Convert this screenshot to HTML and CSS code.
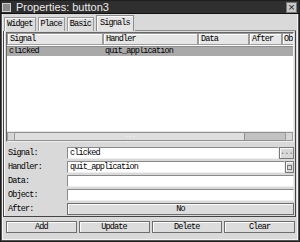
FILE: index.html
```html
<!DOCTYPE html>
<html lang="en">
  <head>
    <meta charset="UTF-8" />
    <title>Properties: button3</title>
    <link rel="stylesheet" href="styles.css">
  </head>
  <body>
    <div class="window">
      <div class="titlebar">
        <span class="win-icon"></span>
        <span class="title">Properties: button3</span>
        <span class="close">&times;</span>
      </div>
      <div class="client">
        <div class="tabs">
          <div class="tab">Widget</div>
          <div class="tab">Place</div>
          <div class="tab">Basic</div>
          <div class="tab active">Signals</div>
          <div class="tab-fill"></div>
        </div>
        <div class="page">
          <div class="list">
            <div class="list-head">
              <div class="col c-signal">Signal</div>
              <div class="col c-handler">Handler</div>
              <div class="col c-data">Data</div>
              <div class="col c-after">After</div>
              <div class="col c-obj">Ob</div>
            </div>
            <div class="list-row selected">
              <div class="cell c-signal">clicked</div>
              <div class="cell c-handler">quit_application</div>
            </div>
            <div class="list-body"></div>
            <div class="hscroll">
              <span class="arrow left"></span>
              <div class="trough">
                <span class="grip">&middot;&middot;&middot;</span>
                <span class="thumb"></span>
              </div>
              <span class="arrow right"></span>
            </div>
          </div>
          <div class="form">
            <label>Signal:</label>
            <div class="field">
              <div class="entry">clicked</div>
              <div class="small-btn dots">...</div>
            </div>
            <label>Handler:</label>
            <div class="field">
              <div class="entry">quit_application</div>
              <div class="small-btn combo"><span></span></div>
            </div>
            <label>Data:</label>
            <div class="field"><div class="entry"></div></div>
            <label>Object:</label>
            <div class="field"><div class="entry"></div></div>
            <label>After:</label>
            <div class="field"><div class="btn wide">No</div></div>
          </div>
        </div>
        <div class="actions">
          <div class="btn">Add</div>
          <div class="btn">Update</div>
          <div class="btn">Delete</div>
          <div class="btn">Clear</div>
        </div>
      </div>
    </div>
  </body>
</html>
```

FILE: styles.css
```css
/* Page */
body {
  margin: 0;
  font-family: "Liberation Mono", "DejaVu Sans Mono", monospace;
  font-size: 8.5px;
  letter-spacing: -0.85px;
  color: #000;
  background: #fff;
}

/* Window frame */
.window {
  width: 300px;
  height: 242px;
  box-sizing: border-box;
  background: #d9d9d9;
  border: 1px solid #1e1e1e;
  display: flex;
  flex-direction: column;
}

.titlebar {
  height: 12px;
  background: #2f2f2f;
  display: flex;
  align-items: center;
  padding: 0 2px 0 1px;
  border-bottom: 1px solid #111;
}

.win-icon {
  width: 9px;
  height: 9px;
  background: #8a8a8a;
  border: 1px solid #cfcfcf;
  box-sizing: border-box;
  margin-right: 5px;
}

.title {
  flex: 1;
  font-family: "Liberation Sans", Arial, sans-serif;
  font-size: 11px;
  letter-spacing: 0;
  color: #ececec;
}

.close {
  width: 9px;
  height: 9px;
  background: #c8c8c8;
  border: 1px solid #777;
  color: #111;
  font-family: "DejaVu Sans", sans-serif;
  font-size: 9px;
  line-height: 8px;
  text-align: center;
  letter-spacing: 0;
}

.client {
  flex: 1;
  display: flex;
  flex-direction: column;
  border: 1px solid #555;
  border-top: none;
  box-shadow: inset 1px 0 #f4f4f4, inset -1px -1px #f4f4f4;
  padding: 0 2px 3px 1px;
}

/* Tabs */
.tabs {
  display: flex;
  align-items: flex-end;
  height: 17px;
}

.tab {
  height: 13px;
  line-height: 13px;
  padding: 0 2px;
  background: #dcdcdc;
  border: 1px solid #9a9a9a;
  border-bottom: none;
  box-shadow: inset 1px 1px #fafafa;
  margin-right: 1px;
  margin-left: 1px;
}

.tab.active {
  height: 15px;
  line-height: 14px;
  background: #e4e4e4;
  border-color: #8c8c8c;
  padding: 0 3px;
}

.tab-fill {
  flex: 1;
  border-bottom: 1px solid #8c8c8c;
}

/* Notebook page */
.page {
  height: 184px;
  display: flex;
  flex-direction: column;
  border: 1px solid #444;
  border-top: none;
  box-shadow: inset 1px 0 #fafafa;
  padding: 1px 1px 0 2px;
}

.list {
  height: 108px;
  display: flex;
  flex-direction: column;
  background: #fff;
  border: 1px solid #666;
  border-right-color: #eee;
  border-bottom-color: #eee;
}

.list-head,
.list-row {
  display: flex;
  white-space: nowrap;
  overflow: hidden;
}

.col {
  height: 10px;
  line-height: 10px;
  padding-left: 2px;
  background: #e6e6e6;
  border: 1px solid #9c9c9c;
  box-shadow: inset 1px 1px #fff;
  box-sizing: border-box;
  flex-shrink: 0;
}

.list-head .col {
  height: 12px;
  line-height: 11px;
}

.cell {
  flex-shrink: 0;
  padding-left: 2px;
  box-sizing: border-box;
}

.c-signal { width: 96px; }
.c-handler { width: 95px; }
.c-data { width: 51px; }
.c-after { width: 33px; }
.list-head .c-obj {
  flex: 1;
  flex-shrink: 1;
  min-width: 0;
  padding-left: 1px;
  border-right: none;
}

.list-row {
  height: 9px;
  line-height: 9px;
  margin-top: 1px;
}

.list-row.selected {
  background: #a9a9a9;
  border-top: 1px solid #8c8c8c;
}

.list-body {
  flex: 1;
}

/* Horizontal scrollbar */
.hscroll {
  height: 9px;
  display: flex;
  background: #cfcfcf;
  border-top: 1px solid #e8e8e8;
}

.arrow {
  width: 8px;
  background: #d6d6d6;
  border: 1px solid #9a9a9a;
  box-sizing: border-box;
}

.trough {
  flex: 1;
  display: flex;
  align-items: center;
  background: #dedede;
  border-top: 1px solid #8f8f8f;
  border-bottom: 1px solid #8f8f8f;
}

.grip {
  flex: 1;
  text-align: center;
  color: #fafafa;
  font-size: 7px;
  line-height: 6px;
}

.thumb {
  width: 40px;
  align-self: stretch;
  background: #c2c2c2;
  border-left: 1px solid #8f8f8f;
}

/* Form */
.form {
  display: grid;
  grid-template-columns: 61px 1fr;
  grid-auto-rows: 12px;
  row-gap: 2px;
  margin-top: 5px;
  align-items: center;
}

label {
  padding-left: 2px;
  line-height: 12px;
}

.field {
  display: flex;
  height: 12px;
}

.entry {
  flex: 1;
  background: #fff;
  border: 1px solid #8a8a8a;
  border-right-color: #eee;
  border-bottom-color: #eee;
  padding-left: 2px;
  line-height: 10px;
  height: 12px;
  box-sizing: border-box;
}

.small-btn {
  background: #d8d8d8;
  border: 1px solid #777;
  box-shadow: inset 1px 1px #fafafa;
  box-sizing: border-box;
  height: 12px;
}

.small-btn.dots {
  width: 15px;
  text-align: center;
  line-height: 9px;
  color: #666;
}

.small-btn.combo {
  width: 9px;
  display: flex;
  align-items: center;
  justify-content: center;
}

.small-btn.combo span {
  width: 3px;
  height: 3px;
  border: 1px solid #777;
}

/* Buttons */
.btn {
  flex: 1;
  height: 12px;
  line-height: 11px;
  text-align: center;
  background: #dcdcdc;
  border: 1px solid #6e6e6e;
  box-shadow: inset 1px 1px #fbfbfb;
  box-sizing: border-box;
}

.actions {
  display: flex;
  gap: 2px;
  margin-top: 4px;
  padding: 0 1px 0 3px;
}
```
